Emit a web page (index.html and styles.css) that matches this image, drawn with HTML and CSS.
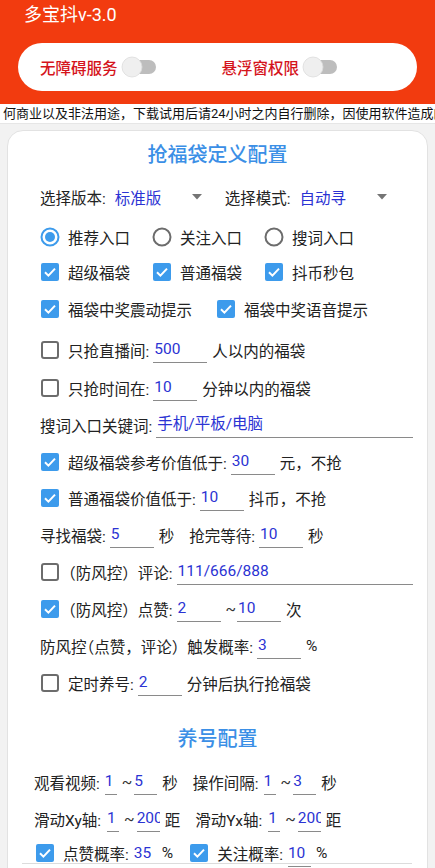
FILE: index.html
```html
<!DOCTYPE html>
<html lang="zh-CN">
<head>
<meta charset="utf-8">
<title>多宝抖v-3.0</title>
<link rel="stylesheet" href="styles.css">
</head>
<body>
<header class="appbar">
  <div class="app-title">多宝抖v-3.0</div>
  <div class="perm-pill">
    <div class="perm">
      <span class="perm-label">无障碍服务</span>
      <svg class="switch" width="36" height="22" viewBox="0 0 36 22"><rect x="6" y="4" width="29" height="14" rx="7" fill="#bdbdbd"/><circle cx="11" cy="11" r="10" fill="#efefef" stroke="#dcdcdc" stroke-width="0.8"/></svg>
    </div>
    <div class="perm">
      <span class="perm-label">悬浮窗权限</span>
      <svg class="switch" width="36" height="22" viewBox="0 0 36 22"><rect x="6" y="4" width="29" height="14" rx="7" fill="#bdbdbd"/><circle cx="11" cy="11" r="10" fill="#efefef" stroke="#dcdcdc" stroke-width="0.8"/></svg>
    </div>
  </div>
</header>
<div class="notice">何商业以及非法用途，下载试用后请24小时之内自行删除，因使用软件造成的使用者自行承担</div>

<main class="card">
  <h2 class="sec-title">抢福袋定义配置</h2>

  <section class="sec sec-main">
    <div class="row r-first">
      <span>选择版本:</span>
      <span class="spinner"><span class="val">标准版</span><svg class="arrow" width="10" height="6" viewBox="0 0 10 6"><path d="M0 0H10L5 5.5Z" fill="#757575"/></svg></span>
      <span>选择模式:</span>
      <span class="spinner"><span class="val">自动寻</span><svg class="arrow" width="10" height="6" viewBox="0 0 10 6"><path d="M0 0H10L5 5.5Z" fill="#757575"/></svg></span>
    </div>

    <div class="row opts radios r-radio">
      <span class="opt"><svg class="rb" width="20" height="20" viewBox="0 0 20 20"><circle cx="10" cy="10" r="8.5" fill="none" stroke="#3d9bec" stroke-width="2"/><circle cx="10" cy="10" r="5" fill="#3d9bec"/></svg>推荐入口</span>
      <span class="opt"><svg class="rb" width="20" height="20" viewBox="0 0 20 20"><circle cx="10" cy="10" r="8.5" fill="none" stroke="#6c6c6c" stroke-width="2"/></svg>关注入口</span>
      <span class="opt"><svg class="rb" width="20" height="20" viewBox="0 0 20 20"><circle cx="10" cy="10" r="8.5" fill="none" stroke="#6c6c6c" stroke-width="2"/></svg>搜词入口</span>
    </div>

    <div class="row opts r-tight">
      <span class="opt"><svg class="cb" width="18" height="18" viewBox="0 0 18 18"><rect width="18" height="18" rx="2" fill="#3d9bec"/><path d="M4 9.3L7.4 12.6L14 5.6" fill="none" stroke="#fff" stroke-width="2"/></svg>超级福袋</span>
      <span class="opt"><svg class="cb" width="18" height="18" viewBox="0 0 18 18"><rect width="18" height="18" rx="2" fill="#3d9bec"/><path d="M4 9.3L7.4 12.6L14 5.6" fill="none" stroke="#fff" stroke-width="2"/></svg>普通福袋</span>
      <span class="opt"><svg class="cb" width="18" height="18" viewBox="0 0 18 18"><rect width="18" height="18" rx="2" fill="#3d9bec"/><path d="M4 9.3L7.4 12.6L14 5.6" fill="none" stroke="#fff" stroke-width="2"/></svg>抖币秒包</span>
    </div>

    <div class="row opts opts-wide">
      <span class="opt"><svg class="cb" width="18" height="18" viewBox="0 0 18 18"><rect width="18" height="18" rx="2" fill="#3d9bec"/><path d="M4 9.3L7.4 12.6L14 5.6" fill="none" stroke="#fff" stroke-width="2"/></svg>福袋中奖震动提示</span>
      <span class="opt"><svg class="cb" width="18" height="18" viewBox="0 0 18 18"><rect width="18" height="18" rx="2" fill="#3d9bec"/><path d="M4 9.3L7.4 12.6L14 5.6" fill="none" stroke="#fff" stroke-width="2"/></svg>福袋中奖语音提示</span>
    </div>

    <div class="row r-loose">
      <svg class="cb" width="18" height="18" viewBox="0 0 18 18"><rect x="1" y="1" width="16" height="16" rx="2" fill="none" stroke="#6c6c6c" stroke-width="2"/></svg>
      <span>只抢直播间:</span><span class="field w54">500</span><span>人以内的福袋</span>
    </div>

    <div class="row r-plus1">
      <svg class="cb" width="18" height="18" viewBox="0 0 18 18"><rect x="1" y="1" width="16" height="16" rx="2" fill="none" stroke="#6c6c6c" stroke-width="2"/></svg>
      <span>只抢时间在:</span><span class="field">10</span><span>分钟以内的福袋</span>
    </div>

    <div class="row">
      <span>搜词入口关键词:</span><span class="field grow">手机/平板/电脑</span>
    </div>

    <div class="row">
      <svg class="cb" width="18" height="18" viewBox="0 0 18 18"><rect width="18" height="18" rx="2" fill="#3d9bec"/><path d="M4 9.3L7.4 12.6L14 5.6" fill="none" stroke="#fff" stroke-width="2"/></svg>
      <span>超级福袋参考价值低于:</span><span class="field">30</span><span>元，不抢</span>
    </div>

    <div class="row r-minus1">
      <svg class="cb" width="18" height="18" viewBox="0 0 18 18"><rect width="18" height="18" rx="2" fill="#3d9bec"/><path d="M4 9.3L7.4 12.6L14 5.6" fill="none" stroke="#fff" stroke-width="2"/></svg>
      <span>普通福袋价值低于:</span><span class="field">10</span><span>抖币，不抢</span>
    </div>

    <div class="row">
      <span>寻找福袋:</span><span class="field">5</span><span class="unit">秒</span>
      <span>抢完等待:</span><span class="field">10</span><span>秒</span>
    </div>

    <div class="row">
      <svg class="cb" width="18" height="18" viewBox="0 0 18 18"><rect x="1" y="1" width="16" height="16" rx="2" fill="none" stroke="#6c6c6c" stroke-width="2"/></svg>
      <span><span class="halt">（</span>防风控）评论:</span><span class="field grow">111/666/888</span>
    </div>

    <div class="row">
      <svg class="cb" width="18" height="18" viewBox="0 0 18 18"><rect width="18" height="18" rx="2" fill="#3d9bec"/><path d="M4 9.3L7.4 12.6L14 5.6" fill="none" stroke="#fff" stroke-width="2"/></svg>
      <span><span class="halt">（</span>防风控）点赞:</span><span class="field">2</span><span class="tilde">~</span><span class="field">10</span><span>次</span>
    </div>

    <div class="row">
      <span>防风控<span class="halt">（</span>点赞，评论）触发概率:</span><span class="field">3</span><span>%</span>
    </div>

    <div class="row">
      <svg class="cb" width="18" height="18" viewBox="0 0 18 18"><rect x="1" y="1" width="16" height="16" rx="2" fill="none" stroke="#6c6c6c" stroke-width="2"/></svg>
      <span>定时养号:</span><span class="field">2</span><span>分钟后执行抢福袋</span>
    </div>
  </section>

  <h2 class="sec-title sec-title-2">养号配置</h2>

  <section class="sec sec-keep">
    <div class="row">
      <span>观看视频:</span><span class="field sm w12">1</span><span class="tilde">~</span><span class="field sm w23">5</span><span class="unit">秒</span>
      <span>操作间隔:</span><span class="field sm w12">1</span><span class="tilde">~</span><span class="field sm w23">3</span><span>秒</span>
    </div>
    <div class="row">
      <span>滑动Xy轴:</span><span class="field sm w12 gap6">1</span><span class="tilde">~</span><span class="field sm w23">200</span><span class="unit">距</span>
      <span>滑动Yx轴:</span><span class="field sm w12 gap6">1</span><span class="tilde">~</span><span class="field sm w23">200</span><span>距</span>
    </div>
    <div class="row r-last">
      <svg class="cb" width="18" height="18" viewBox="0 0 18 18"><rect width="18" height="18" rx="2" fill="#3d9bec"/><path d="M4 9.3L7.4 12.6L14 5.6" fill="none" stroke="#fff" stroke-width="2"/></svg>
      <span>点赞概率:</span><span class="field sm w23 plain">35</span><span class="unit">%</span>
      <svg class="cb" width="18" height="18" viewBox="0 0 18 18"><rect width="18" height="18" rx="2" fill="#3d9bec"/><path d="M4 9.3L7.4 12.6L14 5.6" fill="none" stroke="#fff" stroke-width="2"/></svg>
      <span>关注概率:</span><span class="field sm w23">10</span><span>%</span>
    </div>
    <div class="divider"></div>
  </section>
</main>
</body>
</html>
```
FILE: styles.css
```css
* { box-sizing: border-box; }
html, body { margin: 0; padding: 0; }
body {
  width: 435px;
  height: 868px;
  overflow: hidden;
  background: #f2f2f2;
  font-family: Roboto, "Noto Sans CJK SC", sans-serif;
  color: #222;
}

.appbar {
  background: #f23b0f;
  height: 104px;
  padding: 3px 18px 0 18px;
}
.app-title {
  color: #fff;
  font-size: 18px;
  line-height: 24px;
  padding-left: 6px;
}
.perm-pill {
  margin-top: 16px;
  height: 48px;
  background: #fff;
  border-radius: 24px;
  display: flex;
  align-items: center;
  padding-left: 22px;
  gap: 65px;
}
.perm { display: flex; align-items: center; }
.perm-label {
  color: #d5141c;
  font-size: 15.5px;
  font-weight: 500;
}
.switch { margin-left: 3px; display: block; }

.notice {
  height: 20px;
  line-height: 20px;
  font-size: 13px;
  background: #fff;
  color: #111;
  white-space: nowrap;
  overflow: hidden;
  padding-left: 3px;
  border-bottom: 1px solid #e6e6e6;
}

.card {
  margin: 6px 7px 0 7px;
  background: #fff;
  border: 1px solid #e2e2e2;
  border-radius: 16px;
  padding-bottom: 20px;
}
.sec-title {
  margin: 0;
  padding-top: 11px;
  text-align: center;
  font-size: 20px;
  line-height: 26px;
  font-weight: 500;
  color: #3b8fe6;
}
.sec-title-2 { padding-top: 0; margin-top: 25px; }

.sec { font-size: 15.5px; }
.sec-main { padding: 10px 14px 0 32px; }
.sec-keep { padding: 11px 14px 0 26px; }

.row {
  height: 37px;
  display: flex;
  align-items: center;
  white-space: nowrap;
}
.r-radio { margin-top: 3px; }
.r-tight { margin-top: -2px; }
.r-loose { margin-top: 4px; }
.r-plus1 { margin-top: 1px; }
.r-minus1 { margin-top: -1px; }
.r-last { margin-top: 6px; height: 20px; }

.halt { font-feature-settings: "halt" 1; }

.cb { display: block; flex: none; margin: 0 9px 0 1px; }
.rb { display: block; flex: none; margin-right: 8px; }
.sec-keep .cb { margin-left: 2px; }

.opts { gap: 22px; }
.opts-wide { gap: 24px; }
.opt { display: flex; align-items: center; }

.spinner { display: flex; align-items: center; padding-left: 9px; }
.spinner .val { width: 77px; color: #2b33d3; }
.arrow { display: block; margin-right: 23px; }

.field {
  display: block;
  width: 44px;
  height: 27px;
  line-height: 26px;
  margin: 0 5px 0 4px;
  padding-left: 1px;
  border-bottom: 1px solid #8a8a8a;
  color: #2b33d3;
  overflow: hidden;
  flex: none;
}
.field.w54 { width: 54px; }
.field.grow { flex: 1; margin-right: 0; }
.field.sm { margin: 0 5px; padding-left: 0; }
.field.w12 { width: 12px; }
.field.w23 { width: 23px; }
.field.gap6 { margin-left: 6px; }
.field.plain { border-bottom-color: transparent; }
.tilde { margin-right: -3px; color: #333; }
.unit { margin-right: 15px; }

.divider {
  height: 1px;
  background: #dcdcdc;
  margin: 0 1px 0 -12px;
}
```
